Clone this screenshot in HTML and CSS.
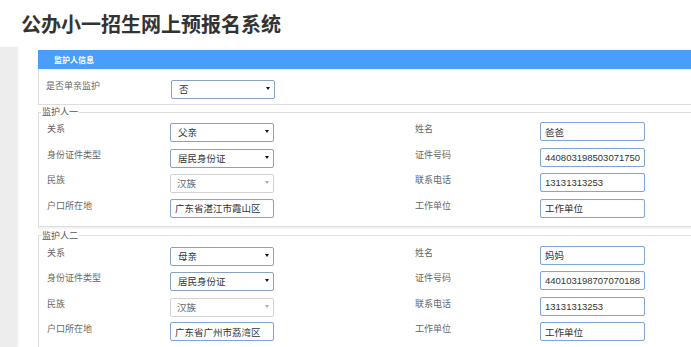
FILE: index.html
```html
<!DOCTYPE html>
<html lang="zh-CN">
<head>
    <meta charset="UTF-8">
    <meta name="viewport" content="width=device-width, initial-scale=1.0">
    <title>公办小一招生网上预报名系统</title>
    <link rel="stylesheet" href="styles.css">
</head>
<body>
    <header class="top">
        <h1>公办小一招生网上预报名系统</h1>
    </header>
    <div class="layout">
        <aside class="side"></aside>
        <main class="content">
            <section class="panel">
                <div class="panel-head">监护人信息</div>
                <div class="panel-body">
                    <label>是否单亲监护</label>
                    <div class="sel"><select><option>否</option><option>是</option></select></div>
                </div>
            </section>

            <fieldset class="guardian">
                <legend>监护人一</legend>
                <div class="grid">
                    <label>关系</label>
                    <div class="sel"><select><option>父亲</option></select></div>
                    <label>姓名</label>
                    <input type="text" value="爸爸">

                    <label>身份证件类型</label>
                    <div class="sel"><select><option>居民身份证</option></select></div>
                    <label>证件号码</label>
                    <input type="text" value="440803198503071750">

                    <label>民族</label>
                    <div class="sel off"><select disabled><option>汉族</option></select></div>
                    <label>联系电话</label>
                    <input type="text" value="13131313253">

                    <label>户口所在地</label>
                    <input type="text" value="广东省湛江市霞山区">
                    <label>工作单位</label>
                    <input type="text" value="工作单位">
                </div>
            </fieldset>

            <fieldset class="guardian">
                <legend>监护人二</legend>
                <div class="grid">
                    <label>关系</label>
                    <div class="sel"><select><option>母亲</option></select></div>
                    <label>姓名</label>
                    <input type="text" value="妈妈">

                    <label>身份证件类型</label>
                    <div class="sel"><select><option>居民身份证</option></select></div>
                    <label>证件号码</label>
                    <input type="text" value="440103198707070188">

                    <label>民族</label>
                    <div class="sel off"><select disabled><option>汉族</option></select></div>
                    <label>联系电话</label>
                    <input type="text" value="13131313253">

                    <label>户口所在地</label>
                    <input type="text" value="广东省广州市荔湾区">
                    <label>工作单位</label>
                    <input type="text" value="工作单位">
                </div>
            </fieldset>
        </main>
    </div>
</body>
</html>
```

FILE: styles.css
```css
body {
    margin: 0;
    background: #fff;
    color: #333;
    font-family: "Liberation Sans", "Noto Sans CJK SC", sans-serif;
    overflow: hidden;
}
.top h1 {
    margin: 0;
    height: 47px;
    line-height: 47px;
    padding-left: 21px;
    font-family: "Noto Sans CJK SC", sans-serif;
    font-size: 20px;
    font-weight: bold;
    color: #333;
}
.layout {
    display: flex;
    align-items: flex-start;
}
.side {
    width: 17px;
    height: 300px;
    flex-shrink: 0;
    background: #ededed;
    box-shadow: 1px 0 2px rgba(0, 0, 0, 0.08);
}
.content {
    width: 680px;
    flex-shrink: 0;
    margin: 3px 0 0 21px;
}
.panel-head {
    height: 19px;
    line-height: 19px;
    padding-left: 16px;
    background: #489ef8;
    color: #fff;
    font-family: "Noto Sans CJK SC", sans-serif;
    font-size: 8px;
    font-weight: bold;
}
.panel-body {
    display: grid;
    grid-template-columns: 125px 104px;
    align-items: start;
    padding: 10px 0 6px 7px;
    border-left: 1px solid #ddd;
    border-bottom: 1px solid #ddd;
}
label {
    font-family: "Noto Sans CJK SC", sans-serif;
    font-size: 9px;
    line-height: 14px;
    color: #666;
}
.guardian {
    margin: 2px 0 0 0;
    padding: 5px 0 8px 0;
    min-width: 0;
    border: 1px solid #ddd;
    box-shadow: 0 2px 0 #f3f3f3;
}
.guardian + .guardian {
    margin-top: 4px;
}
.guardian legend {
    margin-left: 2px;
    padding: 0 1px;
    font-family: "Noto Sans CJK SC", sans-serif;
    font-size: 9px;
    line-height: 10px;
    color: #555;
}
.grid {
    display: grid;
    grid-template-columns: 123px 245px 125px 105px;
    grid-auto-rows: 19px;
    row-gap: 6.5px;
    align-items: start;
    padding-left: 8px;
}
input,
select {
    box-sizing: border-box;
    height: 19px;
    margin: 0;
    font-family: "Liberation Sans", "Noto Sans CJK SC", sans-serif;
    font-size: 9.5px;
    color: #333;
    background: #fff;
    border-radius: 2px;
    outline: none;
}
input {
    width: 105px;
    padding: 0 4px;
    border: 1px solid #7fa6d4;
    box-shadow: inset 0 0 1px rgba(90, 140, 200, 0.3);
}
.grid > input:nth-child(4n+2) {
    width: 104px;
}
.sel {
    position: relative;
    width: 104px;
    height: 19px;
}
.sel select {
    width: 100%;
    padding: 0 0 0 7px;
    border: 1px solid #8aa1c4;
    appearance: none;
    -webkit-appearance: none;
}
.sel::after {
    content: "";
    position: absolute;
    right: 5px;
    top: 8px;
    border-left: 2.5px solid transparent;
    border-right: 2.5px solid transparent;
    border-top: 3px solid #111;
}
.sel.off select {
    border-color: #d2d2d2;
    color: #666;
    -webkit-text-fill-color: #666;
    opacity: 1;
    padding-left: 6px;
}
.sel.off::after {
    border-top-color: #aaa;
}
```
